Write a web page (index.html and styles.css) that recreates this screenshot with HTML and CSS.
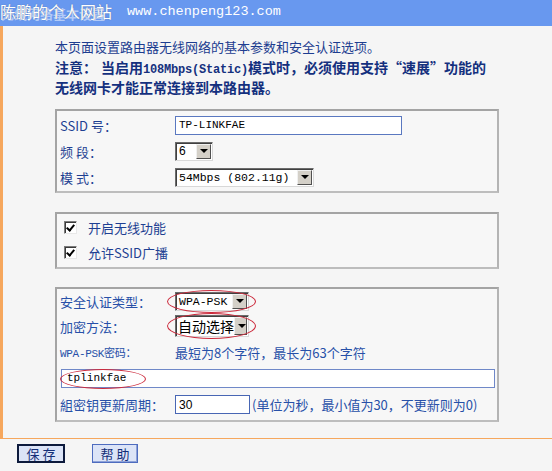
FILE: index.html
```html
<!DOCTYPE html>
<html>
<head>
<meta charset="utf-8">
<link rel="stylesheet" href="styles.css">
</head>
<body>
<div class="header">
  <div class="title">
    <span class="title-under">无线网络基本设置</span>
    <span class="watermark">陈鹏的个人网站</span>
  </div>
  <span class="site">www.chenpeng123.com</span>
</div>
<div class="main">
  <div class="intro">
    <p>本页面设置路由器无线网络的基本参数和安全认证选项。</p>
    <p class="note">注意：<span class="gap"></span>当启用<span class="lat">108Mbps(Static)</span>模式时，必须使用支持“速展”功能的</p>
    <p class="note">无线网卡才能正常连接到本路由器。</p>
  </div>

  <div class="box box1">
    <div class="row">
      <span class="label">SSID 号：</span>
      <span class="input ssid mono">TP-LINKFAE</span>
    </div>
    <div class="row">
      <span class="label">频 段：</span>
      <span class="select w-band"><span class="sel-text sans">6</span><span class="arrow"></span></span>
    </div>
    <div class="row">
      <span class="label">模 式：</span>
      <span class="select w-mode"><span class="sel-text mono">54Mbps (802.11g)</span><span class="arrow"></span></span>
    </div>
  </div>

  <div class="box box2">
    <div class="crow"><span class="check"></span><span class="clabel">开启无线功能</span></div>
    <div class="crow"><span class="check"></span><span class="clabel">允许SSID广播</span></div>
  </div>

  <div class="box box3">
    <div class="row r1">
      <span class="label">安全认证类型：</span>
      <span class="ring-wrap">
        <span class="select w-sec"><span class="sel-text mono">WPA-PSK</span><span class="arrow"></span></span>
        <span class="ring"></span>
      </span>
    </div>
    <div class="row">
      <span class="label">加密方法：</span>
      <span class="ring-wrap">
        <span class="select w-sec tall"><span class="sel-text">自动选择</span><span class="arrow"></span></span>
        <span class="ring"></span>
      </span>
    </div>
    <div class="row">
      <span class="label small-mono">WPA-PSK密码：</span>
      <span class="hint">最短为8个字符，最长为63个字符</span>
    </div>
    <div class="row">
      <span class="input pwd mono">
        <span class="ring-wrap pw">tplinkfae<span class="ring pwring"></span></span>
      </span>
    </div>
    <div class="row r5">
      <span class="label">組密钥更新周期：</span>
      <span class="input period sans">30</span>
      <span class="unit">(单位为秒，最小值为30，不更新则为0)</span>
    </div>
  </div>
</div>
<div class="footer">
  <span class="btn save">保 存</span>
  <span class="btn help">帮 助</span>
</div>
</body>
</html>
```

FILE: styles.css
```css
html, body {
  margin: 0;
  padding: 0;
}
body {
  width: 552px;
  height: 471px;
  overflow: hidden;
  background: #f5f5f5;
  font-family: "Noto Sans CJK SC", "Liberation Sans", sans-serif;
  font-size: 13px;
  color: #1e3f92;
}
.mono { font-family: "Liberation Mono", "Noto Sans CJK SC", monospace; }
.sans { font-family: "Liberation Sans", sans-serif; }

.header {
  height: 26px;
  background: #6898ef;
  display: flex;
  align-items: center;
}
.title {
  position: relative;
  width: 112px;
  height: 26px;
  margin-left: 1px;
}
.title-under {
  display: block;
  padding-top: 6px;
  font-size: 13px;
  line-height: 16px;
  font-weight: bold;
  color: rgba(255,255,255,0.5);
  white-space: nowrap;
}
.watermark {
  position: absolute;
  left: -1px;
  top: 1px;
  font-size: 16px;
  line-height: 20px;
  color: #ffffff;
  white-space: nowrap;
  text-shadow: 0 0 1px rgba(60,60,60,0.5);
}
.site {
  margin-left: 14px;
  margin-top: -4px;
  font-family: "Liberation Mono", monospace;
  font-size: 13.5px;
  color: #ffffff;
}

.main {
  border-left: 3px solid #f6a75d;
  padding: 11px 0 16px 52px;
}
.intro p {
  margin: 0;
  height: 20px;
  line-height: 20px;
  white-space: nowrap;
  color: #1d3d90;
}
.intro .note {
  font-size: 14px;
  font-weight: bold;
  color: #14307e;
}
.intro .gap {
  display: inline-block;
  width: 4px;
}
.intro .lat {
  font-family: "Liberation Mono", monospace;
  font-size: 12px;
  font-weight: bold;
  letter-spacing: -0.2px;
}

.box {
  width: 444px;
  box-sizing: border-box;
  border: 2px solid;
  border-color: #a4a4a4 #b4b4b4 #bdbdbd #a4a4a4;
  background: #f7f7f7;
}
.box1 { margin-top: 12px; padding: 1px 0 1px 3px; }
.box2 { margin-top: 19px; padding: 1px 0 2px 7px; }
.box3 { margin-top: 18px; padding: 0 0 2px 3px; }

.row {
  display: flex;
  align-items: center;
  height: 26px;
  white-space: nowrap;
}
.box3 .r1 { height: 24px; }
.box3 .r5 { height: 27px; }
.label {
  width: 115px;
  flex: none;
  color: #1e3f92;
}
.box3 .label { color: #2750a8; }
.small-mono {
  font-family: "Liberation Mono", "Noto Sans CJK SC", monospace;
  font-size: 11px;
  letter-spacing: -0.3px;
}

.input {
  display: inline-flex;
  align-items: center;
  box-sizing: border-box;
  height: 19px;
  background: #ffffff;
  border: 1px solid #5a78c0;
  padding-left: 3px;
  font-size: 11px;
  color: #000;
}
.ssid { width: 227px; }
.pwd {
  width: 434px;
  margin-left: 1px;
  border-color: #6f88c8;
  padding-left: 5px;
}
.period {
  width: 75px;
  font-size: 12px;
  border-color: #4866b4;
}
.unit {
  margin-left: 2px;
  color: #2750a8;
}
.hint { color: #2750a8; }

.select {
  display: inline-flex;
  align-items: stretch;
  box-sizing: border-box;
  height: 19px;
  background: #ffffff;
  border: 1px solid;
  border-color: #6c6c6c #d8d8d8 #d8d8d8 #6c6c6c;
  box-shadow: inset 1px 1px 0 #404040;
}
.sel-text {
  flex: 1;
  display: flex;
  align-items: center;
  padding-left: 3px;
  font-size: 11.5px;
  color: #000;
}
.select .sel-text.sans { font-size: 12px; }
.select.tall { height: 22px; }
.select.tall .sel-text { font-size: 14px; padding-left: 2px; }
.arrow {
  position: relative;
  width: 15px;
  margin: 1px 1px 1px 0;
  background: #d4d0c8;
  border: 1px solid;
  border-color: #f0f0f0 #505050 #505050 #f0f0f0;
  box-sizing: border-box;
}
.arrow::after {
  content: "";
  position: absolute;
  left: 3px;
  top: 50%;
  margin-top: -2px;
  border-left: 4px solid transparent;
  border-right: 4px solid transparent;
  border-top: 4px solid #000;
}
.w-band { width: 38px; }
.w-mode { width: 139px; }
.w-sec { width: 74px; }

.ring-wrap {
  position: relative;
  display: inline-flex;
  align-items: center;
}
.ring {
  position: absolute;
  left: -8px;
  right: -7px;
  top: -2px;
  bottom: -2px;
  border: 1.5px solid #cc2a3c;
  border-radius: 50%;
  pointer-events: none;
}
.pw {
  height: 17px;
}
.pwring {
  left: -7px;
  right: -20px;
  top: -1px;
  bottom: -2px;
}

.crow {
  display: flex;
  align-items: center;
  height: 25px;
}
.check {
  position: relative;
  width: 13px;
  height: 13px;
  box-sizing: border-box;
  background: #fff;
  border: 1px solid;
  border-color: #7c7c7c #e8e8e8 #e8e8e8 #7c7c7c;
  box-shadow: inset 1px 1px 0 #3a3a3a;
}
.check::after {
  content: "";
  position: absolute;
  left: 3px;
  top: 1px;
  width: 3px;
  height: 6px;
  border-right: 2px solid #000;
  border-bottom: 2px solid #000;
  transform: rotate(40deg);
}
.clabel {
  margin-left: 11px;
  color: #1e3f92;
}

.footer {
  border-top: 1px solid #f6a75d;
  padding: 5px 0 0 17px;
  display: flex;
  gap: 27px;
}
.btn {
  display: inline-flex;
  align-items: center;
  justify-content: center;
  box-sizing: border-box;
  height: 19px;
  background: #dce4f7;
  color: #142f78;
  font-size: 13px;
  white-space: pre;
}
.save {
  width: 48px;
  border: 2px solid #0d1a3c;
}
.help {
  width: 46px;
  border: 1px solid #4e6cbf;
  box-shadow: inset -1px -1px 0 #8ea2d8;
}
```
